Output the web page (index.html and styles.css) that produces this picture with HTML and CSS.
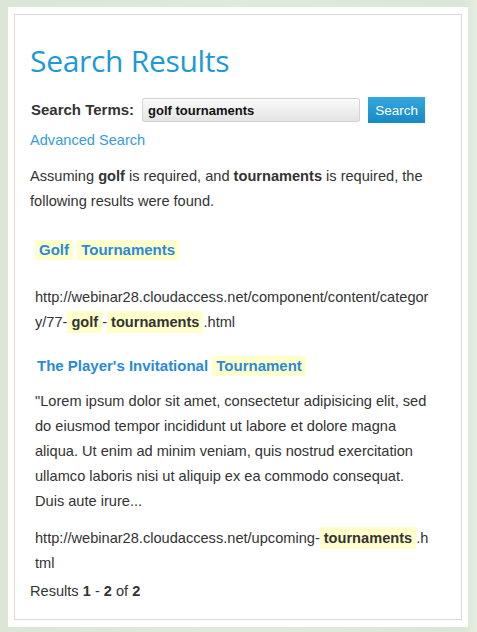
FILE: index.html
```html
<!DOCTYPE html>
<html>
<head>
<meta charset="utf-8">
<link rel="stylesheet" href="styles.css">
</head>
<body>
<div class="frame">
  <div class="panel">
    <h1 class="page-title">Search Results</h1>
    <form class="search-row">
      <label class="search-label">Search Terms:</label>
      <input class="search-input" type="text" value="golf tournaments">
      <button class="search-btn" type="button">Search</button>
    </form>
    <a class="adv-link" href="#">Advanced Search</a>
    <p class="summary">Assuming <b>golf</b> is required, and <b>tournaments</b> is required, the following results were found.</p>

    <div class="result first">
      <div class="result-title"><a href="#"><span class="hl-title">Golf</span> <span class="hl-title">Tournaments</span></a></div>
      <div class="result-url">http://webinar28.cloudaccess.net/component/content/category/77-<span class="hl">golf</span>-<span class="hl">tournaments</span>.html</div>
    </div>

    <div class="result second">
      <div class="result-title indent"><a href="#">The Player's Invitational <span class="hl-title">Tournament</span></a></div>
      <p class="result-text">"Lorem ipsum dolor sit amet, consectetur adipisicing elit, sed do eiusmod tempor incididunt ut labore et dolore magna aliqua. Ut enim ad minim veniam, quis nostrud exercitation ullamco laboris nisi ut aliquip ex ea commodo consequat. Duis aute irure...</p>
      <div class="result-url url2">http://webinar28.cloudaccess.net/upcoming-<span class="hl">tournaments</span>.html</div>
    </div>

    <div class="counter">Results <b>1</b> - <b>2</b> of <b>2</b></div>
  </div>
</div>
</body>
</html>
```

FILE: styles.css
```css
html, body {
  margin: 0;
  padding: 0;
}
body {
  background: linear-gradient(90deg, #dce6d6 0%, #e0eadb 50%, #dbe7d6 97%, #e6eee2 100%);
  font-family: "Liberation Sans", Arial, sans-serif;
  font-size: 14.6px;
  color: #333;
  height: 632px;
  overflow: hidden;
}
.frame {
  margin: 7px 9px 0 8px;
  background: #fff;
  padding: 7px 6px 7px 6px;
}
.panel {
  border: 1px solid #d9d9d9;
  padding: 0 15px 15px 15px;
}
.page-title {
  margin: 28px 0 0 0;
  font-family: "Open Sans", "Liberation Sans", sans-serif;
  font-weight: 400;
  font-size: 30px;
  line-height: 36px;
  color: #1b9ad6;
  letter-spacing: -0.3px;
}
.search-row {
  margin: 18px 0 0 0;
  display: flex;
  align-items: center;
  height: 26px;
}
.search-label {
  font-weight: bold;
  font-size: 15px;
  line-height: 20px;
  color: #333;
  margin-left: 1px;
}
.search-input {
  margin-left: 8px;
  width: 218px;
  height: 24px;
  box-sizing: border-box;
  border: 1px solid #d4d4d4;
  border-radius: 2px;
  background: linear-gradient(#fafafa, #e4e4e4);
  font-family: "Liberation Sans", Arial, sans-serif;
  font-size: 13px;
  font-weight: bold;
  color: #111;
  padding: 0 5px;
  outline: none;
}
.search-btn {
  margin-left: 8px;
  width: 57px;
  height: 26px;
  border: none;
  background: linear-gradient(#35a7df, #168ac6);
  color: #fff;
  font-family: "Liberation Sans", Arial, sans-serif;
  font-size: 13.5px;
  padding: 0;
}
.adv-link {
  display: block;
  margin-top: 7px;
  line-height: 20px;
  color: #3a9ae0;
  text-decoration: none;
}
.summary {
  margin: 14px 0 0 0;
  line-height: 25px;
}
.result {
  margin: 0 15px 0 5px;
}
.result.first {
  margin-top: 23px;
}
.result.second {
  margin-top: 18px;
}
.result-title {
  line-height: 25px;
  font-weight: bold;
  font-size: 15px;
}
.result-title.indent {
  padding-left: 2px;
}
.result-title a {
  color: #2a8ad8;
  text-decoration: none;
}
.hl-title {
  background: #ffffcc;
  padding: 1px 4px 2px;
}
.result-url {
  line-height: 25px;
  word-break: break-all;
  margin-top: 23px;
}
.second .result-title + .result-text {
  margin: 11px 0 0 0;
  line-height: 25px;
}
.url2 {
  margin-top: 12px;
}
.hl {
  background: #ffffcc;
  font-weight: bold;
  padding: 3px 4px 3px;
}
.counter {
  margin-top: 3px;
  line-height: 25px;
}
```
